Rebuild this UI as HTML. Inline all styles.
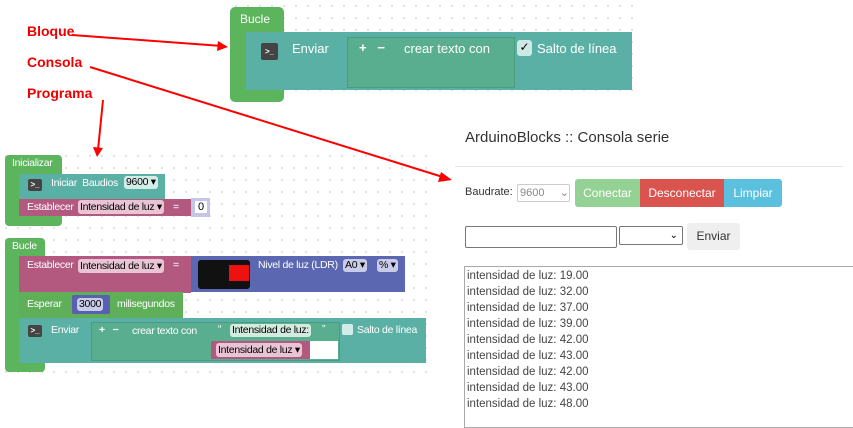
<!DOCTYPE html>
<html><head><meta charset="utf-8"><style>
body{margin:0;width:853px;height:421px;background:#fff;position:relative;overflow:hidden;font-family:"Liberation Sans",sans-serif}
.a{position:absolute}
.dots{background-image:radial-gradient(#d8d8d8 0.8px,transparent 1px);background-size:12px 12px}
.w{color:#fff;font-size:10.5px;letter-spacing:-0.3px;white-space:nowrap}
.lbl{color:#e00;font-weight:bold;font-size:14px}
.ico{background:#444;border-radius:2px;color:#fff;font-size:8px;line-height:14px;text-align:center;font-weight:bold}
.fld{background:#dcdcdc;border-radius:3px;color:#000;font-size:10.5px;letter-spacing:-0.3px;padding:0 2px;line-height:13px;white-space:nowrap}
.pfld{background:#e9c4d4;border-radius:3px;color:#000;font-size:10.5px;letter-spacing:-0.3px;padding:0 2px;line-height:14px;white-space:nowrap}
.line{font-size:11.5px;color:#444;position:absolute;left:467px}
</style></head><body>
<div class="a dots" style="left:230px;top:0;width:410px;height:92px"></div>
<div class="a dots" style="left:0;top:150px;width:432px;height:230px"></div>

<div class="a lbl" style="left:27px;top:23px">Bloque</div>
<div class="a lbl" style="left:27px;top:54px">Consola</div>
<div class="a lbl" style="left:27px;top:85px">Programa</div>
<svg class="a" style="left:0;top:0" width="853" height="421">
<g stroke="#f00" stroke-width="2" fill="none"><line x1="72" y1="35" x2="222" y2="46"/><line x1="90" y1="67" x2="446" y2="178"/><line x1="103" y1="100" x2="98" y2="150"/></g>
<g fill="#f00"><polygon points="228,47 218,41 217,51"/><polygon points="452,180 441,172 438,182"/><polygon points="97,157 93,147 103,148"/></g>
</svg>

<!-- top block -->
<div class="a" style="left:230px;top:7px;width:54px;height:95px;background:#5cb45c;border-radius:5px"></div>
<div class="a" style="left:240px;top:12px;font-size:12px;color:#fff">Bucle</div>
<div class="a" style="left:246px;top:32px;width:386px;height:58px;background:#5bb0a6"></div>
<div class="a ico" style="left:261px;top:43px;width:17px;height:17px;line-height:17px">&gt;_</div>
<div class="a" style="left:292px;top:41px;font-size:13px;color:#fff">Enviar</div>
<div class="a" style="left:347px;top:37px;width:166px;height:49px;background:#5aae90;border:1px solid #4a9c80"></div>
<div class="a" style="left:359px;top:40px;font-size:13px;font-weight:bold;color:#fff">+ &nbsp; −</div>
<div class="a" style="left:404px;top:41px;font-size:13px;color:#fff">crear texto con</div>
<div class="a" style="left:517px;top:40px;width:15px;height:16px;background:#cde9e4;border-radius:3px;color:#000;font-size:12px;text-align:center">✓</div>
<div class="a" style="left:537px;top:41px;font-size:13px;color:#fff">Salto de línea</div>

<!-- Inicializar -->
<div class="a" style="left:5px;top:155px;width:57px;height:71px;background:#5cb45c;border-radius:4px"></div>
<div class="a w" style="left:12px;top:157px">Inicializar</div>
<div class="a" style="left:19px;top:174px;width:146px;height:25px;background:#5bb0a6"></div>
<div class="a ico" style="left:28px;top:179px;width:14px;height:12px;line-height:12px">&gt;_</div>
<div class="a w" style="left:51px;top:177px">Iniciar &nbsp;Baudios</div>
<div class="a fld" style="left:124px;top:176px;background:#d4ece8">9600 ▾</div>
<div class="a" style="left:19px;top:199px;width:172px;height:17px;background:#b3587f"></div>
<div class="a w" style="left:27px;top:201px">Establecer</div>
<div class="a pfld" style="left:78px;top:200px">Intensidad de luz ▾</div>
<div class="a w" style="left:173px;top:201px">=</div>
<div class="a" style="left:191px;top:198px;width:19px;height:19px;background:#c5c5e8"></div>
<div class="a" style="left:195px;top:201px;font-size:11px;background:#fff;padding:0 3px">0</div>

<!-- Bucle -->
<div class="a" style="left:5px;top:238px;width:40px;height:134px;background:#5cb45c;border-radius:4px"></div>
<div class="a w" style="left:12px;top:240px">Bucle</div>
<div class="a" style="left:19px;top:256px;width:172px;height:37px;background:#b3587f"></div>
<div class="a w" style="left:27px;top:259px">Establecer</div>
<div class="a pfld" style="left:78px;top:259px">Intensidad de luz ▾</div>
<div class="a w" style="left:173px;top:259px">=</div>
<div class="a" style="left:191px;top:256px;width:214px;height:36px;background:#5b67b0"></div>
<div class="a" style="left:198px;top:260px;width:52px;height:29px;background:#111;border-radius:3px"></div>
<div class="a" style="left:229px;top:265px;width:20px;height:16px;background:#e11"></div>
<div class="a w" style="left:258px;top:259px">Nivel de luz (LDR)</div>
<div class="a fld" style="left:343px;top:259px;background:#c8cce8">A0 ▾</div>
<div class="a fld" style="left:377px;top:259px;background:#c8cce8">% ▾</div>
<div class="a" style="left:19px;top:292px;width:164px;height:26px;background:#5fae58"></div>
<div class="a w" style="left:27px;top:298px">Esperar</div>
<div class="a" style="left:72px;top:295px;width:38px;height:19px;background:#5b5fb0;border-radius:2px"></div>
<div class="a fld" style="left:77px;top:298px;background:#c8cce8">3000</div>
<div class="a w" style="left:117px;top:298px">milisegundos</div>
<div class="a" style="left:19px;top:318px;width:407px;height:45px;background:#5bb0a6"></div>
<div class="a ico" style="left:28px;top:325px;width:14px;height:12px;line-height:12px">&gt;_</div>
<div class="a w" style="left:51px;top:324px">Enviar</div>
<div class="a" style="left:91px;top:322px;width:247px;height:37px;background:#5aae90;border:1px solid #4a9c80"></div>
<div class="a w" style="left:99px;top:324px;font-weight:bold">+ &nbsp; −</div>
<div class="a w" style="left:132px;top:325px">crear texto con</div>
<div class="a w" style="left:218px;top:323px">“</div>
<div class="a fld" style="left:230px;top:324px;background:#d4ece0">Intensidad de luz:</div>
<div class="a w" style="left:322px;top:323px">”</div>
<div class="a" style="left:211px;top:341px;width:99px;height:18px;background:#b3587f"></div>
<div class="a pfld" style="left:216px;top:343px">Intensidad de luz ▾</div>
<div class="a" style="left:310px;top:341px;width:28px;height:18px;background:#fff"></div>
<div class="a" style="left:342px;top:324px;width:11px;height:11px;background:#d4ece8;border-radius:2px"></div>
<div class="a w" style="left:357px;top:324px">Salto de línea</div>

<!-- console -->
<div class="a" style="left:465px;top:129px;font-size:15px;color:#333">ArduinoBlocks :: Consola serie</div>
<div class="a" style="left:455px;top:166px;width:388px;height:1px;background:#e5e5e5"></div>
<div class="a" style="left:465px;top:186px;font-size:11px;color:#333">Baudrate:</div>
<div class="a" style="left:517px;top:184px;width:53px;height:18px;border:1px solid #ccc;border-radius:2px;font-size:11px;color:#888;line-height:16px;padding-left:2px;box-sizing:border-box">9600 &nbsp; &nbsp; ⌄</div>
<div class="a" style="left:575px;top:179px;width:65px;height:28px;background:#94d194;border-radius:3px 0 0 3px;color:#fff;font-size:12px;line-height:28px;text-align:center">Conectar</div>
<div class="a" style="left:640px;top:179px;width:84px;height:28px;background:#d9534f;color:#fff;font-size:12px;line-height:28px;text-align:center">Desconectar</div>
<div class="a" style="left:724px;top:179px;width:58px;height:28px;background:#5bc0de;border-radius:0 3px 3px 0;color:#fff;font-size:12px;line-height:28px;text-align:center">Limpiar</div>
<div class="a" style="left:465px;top:226px;width:150px;height:20px;border:1px solid #777;border-radius:2px"></div>
<div class="a" style="left:619px;top:226px;width:64px;height:19px;border:1px solid #777;border-radius:2px;font-size:10px;text-align:right;line-height:17px;padding-right:4px;box-sizing:border-box">⌄</div>
<div class="a" style="left:687px;top:223px;width:53px;height:27px;background:#efefef;border-radius:3px;font-size:12px;color:#333;line-height:27px;text-align:center">Enviar</div>
<div class="a" style="left:464px;top:266px;width:390px;height:160px;border:1px solid #aaa;border-right:none"></div>
<div class="line" style="top:270px">intensidad de luz: 19.00</div>
<div class="line" style="top:286px">intensidad de luz: 32.00</div>
<div class="line" style="top:302px">intensidad de luz: 37.00</div>
<div class="line" style="top:318px">intensidad de luz: 39.00</div>
<div class="line" style="top:334px">intensidad de luz: 42.00</div>
<div class="line" style="top:350px">intensidad de luz: 43.00</div>
<div class="line" style="top:366px">intensidad de luz: 42.00</div>
<div class="line" style="top:382px">intensidad de luz: 43.00</div>
<div class="line" style="top:398px">intensidad de luz: 48.00</div>
</body></html>
